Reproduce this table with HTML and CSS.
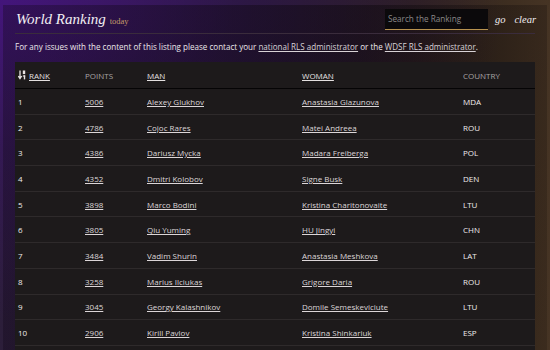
FILE: index.html
```html
<!DOCTYPE html>
<html>
<head>
<meta charset="utf-8">
<link rel="stylesheet" href="styles.css">
</head>
<body>
<div class="page">
  <header class="topbar">
    <h1 class="title">World Ranking <span class="sub">today</span></h1>
    <form class="search">
      <input class="search-input" type="text" placeholder="Search the Ranking">
      <span class="search-btn">go</span>
      <span class="search-btn">clear</span>
    </form>
  </header>
  <p class="info">For any issues with the content of this listing please contact your <a href="#">national RLS administrator</a> or the <a href="#">WDSF RLS administrator</a>.</p>
  <div class="table-wrap">
  <table class="ranking">
    <thead>
      <tr>
        <th class="c-rank"><svg class="sort-icon" width="8" height="10" viewBox="0 0 8 10"><path d="M2 0.5v7.5M0.3 6l1.7 2.6L3.7 6" stroke="#e8e4e4" stroke-width="1.3" fill="none"/><rect x="4.8" y="0.5" width="2.4" height="3.6" fill="#e8e4e4"/><rect x="4.8" y="5.4" width="2.4" height="1.2" fill="#e8e4e4"/><rect x="5.8" y="5.4" width="1.4" height="4" fill="#e8e4e4"/></svg><a href="#">RANK</a></th>
        <th class="c-points">POINTS</th>
        <th class="c-man"><a href="#">MAN</a></th>
        <th class="c-woman"><a href="#">WOMAN</a></th>
        <th class="c-country">COUNTRY</th>
      </tr>
    </thead>
    <tbody>
      <tr><td>1</td><td><a href="#">5006</a></td><td><a href="#">Alexey Glukhov</a></td><td><a href="#">Anastasia Glazunova</a></td><td>MDA</td></tr>
      <tr><td>2</td><td><a href="#">4786</a></td><td><a href="#">Cojoc Rares</a></td><td><a href="#">Matei Andreea</a></td><td>ROU</td></tr>
      <tr><td>3</td><td><a href="#">4386</a></td><td><a href="#">Dariusz Mycka</a></td><td><a href="#">Madara Freiberga</a></td><td>POL</td></tr>
      <tr><td>4</td><td><a href="#">4352</a></td><td><a href="#">Dmitri Kolobov</a></td><td><a href="#">Signe Busk</a></td><td>DEN</td></tr>
      <tr><td>5</td><td><a href="#">3898</a></td><td><a href="#">Marco Bodini</a></td><td><a href="#">Kristina Charitonovaite</a></td><td>LTU</td></tr>
      <tr><td>6</td><td><a href="#">3805</a></td><td><a href="#">Qiu Yuming</a></td><td><a href="#">HU Jingyi</a></td><td>CHN</td></tr>
      <tr><td>7</td><td><a href="#">3484</a></td><td><a href="#">Vadim Shurin</a></td><td><a href="#">Anastasia Meshkova</a></td><td>LAT</td></tr>
      <tr><td>8</td><td><a href="#">3258</a></td><td><a href="#">Marius Ilciukas</a></td><td><a href="#">Grigore Daria</a></td><td>ROU</td></tr>
      <tr><td>9</td><td><a href="#">3045</a></td><td><a href="#">Georgy Kalashnikov</a></td><td><a href="#">Domile Semeskeviciute</a></td><td>LTU</td></tr>
      <tr><td>10</td><td><a href="#">2906</a></td><td><a href="#">Kirill Pavlov</a></td><td><a href="#">Kristina Shinkariuk</a></td><td>ESP</td></tr>
    </tbody>
  </table>
  </div>
</div>
</body>
</html>
```
FILE: styles.css
```css
html, body {
  margin: 0;
  padding: 0;
  height: 100%;
  overflow: hidden;
}
body {
  background:
    radial-gradient(ellipse at 0% 0%, rgba(70,20,130,0.9) 0%, rgba(60,20,110,0.5) 30%, rgba(0,0,0,0) 65%),
    linear-gradient(to right, #2c1e3a 0%, #1e1a1e 45%, #2a2018 75%, #463424 100%);
  font-family: "Open Sans", "Noto Sans", sans-serif;
  color: #e6e2e2;
}
.page {
  margin: 5px 3px 0;
  padding: 0 12px;
  height: 345px;
  display: flex;
  flex-direction: column;
  background: linear-gradient(100deg, rgba(20,8,30,0.35) 0%, rgba(10,6,10,0.45) 60%, rgba(20,12,6,0.2) 100%);
}
.topbar {
  display: flex;
  align-items: center;
  justify-content: space-between;
  height: 28px;
  flex: none;
  border-bottom: 1px solid #3a2c3c;
}
.title {
  margin: 0;
  font-family: "Liberation Serif", serif;
  font-style: italic;
  font-weight: normal;
  font-size: 15px;
  color: #f2eef2;
  padding-left: 1px;
}
.sub {
  font-size: 8.5px;
  font-style: normal;
  color: #c49a68;
}
.search {
  display: flex;
  align-items: center;
  margin-right: -1px;
}
.search-input {
  width: 103px;
  height: 21px;
  box-sizing: border-box;
  background: #0b090b;
  border: none;
  border-bottom: 1px solid #b8924f;
  color: #ddd;
  font-family: "Open Sans", sans-serif;
  font-size: 8.2px;
  padding: 0 3px;
  outline: none;
}
.search-input::placeholder {
  color: #8a8888;
}
.search-btn {
  font-family: "Liberation Serif", serif;
  font-style: italic;
  font-size: 10.5px;
  color: #f2eef2;
  margin-left: 7px;
}
.search-btn + .search-btn {
  margin-left: 9px;
}
.info {
  margin: 0;
  padding: 7px 0 0;
  height: 21px;
  flex: none;
  font-size: 8.05px;
  color: #ece8ea;
}
a {
  color: inherit;
  text-decoration: underline;
}
.info a {
  color: #d8d2d6;
}
.table-wrap {
  flex: 1;
  background: #1d1a1b;
}
.ranking {
  width: 100%;
  border-collapse: collapse;
  font-size: 8px;
  table-layout: fixed;
}
.ranking th {
  text-align: left;
  font-weight: normal;
  color: #a8a4a4;
  height: 26px;
  padding: 0 3px;
  border-bottom: 1px solid #050405;
}
.ranking th a {
  color: #e4e0e0;
}
.sort-icon {
  vertical-align: -1px;
  margin-right: 3px;
}
.c-rank { width: 61px; }
.c-points { width: 56px; }
.c-man { width: 149px; }
.c-woman { width: 155px; }
.ranking td {
  height: 24.7px;
  padding: 0 3px;
  border-bottom: 1px solid #2e2a2b;
  color: #f0ecec;
}
.ranking td a {
  color: #dcd6d8;
}
```
